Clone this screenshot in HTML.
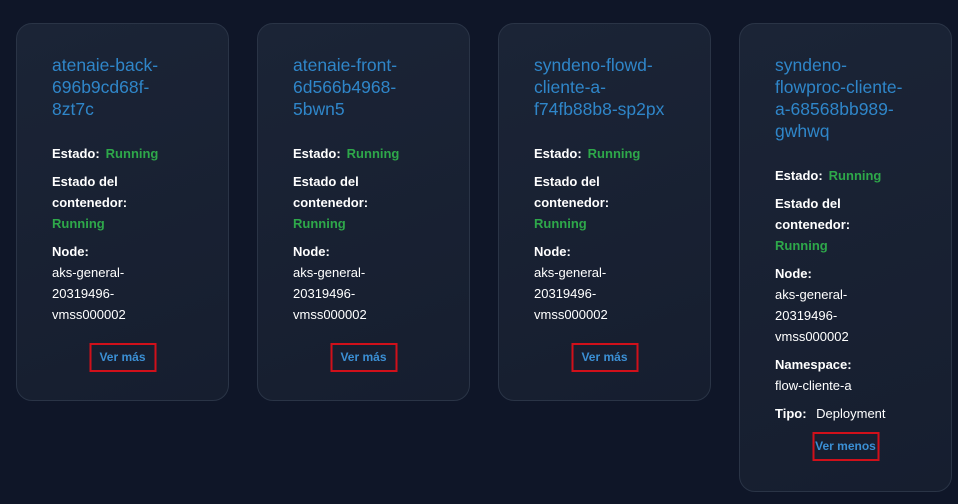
<!DOCTYPE html>
<html><head><meta charset="utf-8"><style>
body{margin:0;width:958px;height:504px;background:#0f1628;font-family:"Liberation Sans",sans-serif;overflow:hidden;position:relative}
.card{position:absolute;top:23px;width:213px;background:linear-gradient(160deg,#1b2436,#161e2f);border:1px solid #2a3446;border-radius:16px;box-sizing:border-box;padding:30px 10px 0 35px}
.t{color:#2f86c9;font-size:17.5px;line-height:22px;margin-bottom:23px}
.f{color:#fff;font-size:13px;line-height:21px;margin-bottom:7px}
.f b{margin-right:6px}
.g{color:#2ea84a;font-weight:bold}
.btn{position:absolute;left:50%;transform:translateX(-50%);border:2px solid #d0101a;color:#3b8fd4;font-size:12px;font-weight:bold;height:29px;box-sizing:border-box;line-height:25px;text-align:center;white-space:nowrap}
</style></head><body>
<div class="card" style="left:16px;height:378px"><div class="t">atenaie-back-<br>696b9cd68f-<br>8zt7c</div>
<div class="f"><b>Estado:</b><span class="g">Running</span></div>
<div class="f"><b>Estado del<br>contenedor:</b><br><span class="g">Running</span></div>
<div class="f"><b>Node:</b><br>aks-general-<br>20319496-<br>vmss000002</div>
<div class="btn" style="top:319px;width:67px">Ver más</div></div>
<div class="card" style="left:257px;height:378px"><div class="t">atenaie-front-<br>6d566b4968-<br>5bwn5</div>
<div class="f"><b>Estado:</b><span class="g">Running</span></div>
<div class="f"><b>Estado del<br>contenedor:</b><br><span class="g">Running</span></div>
<div class="f"><b>Node:</b><br>aks-general-<br>20319496-<br>vmss000002</div>
<div class="btn" style="top:319px;width:67px">Ver más</div></div>
<div class="card" style="left:498px;height:378px"><div class="t">syndeno-flowd-<br>cliente-a-<br>f74fb88b8-sp2px</div>
<div class="f"><b>Estado:</b><span class="g">Running</span></div>
<div class="f"><b>Estado del<br>contenedor:</b><br><span class="g">Running</span></div>
<div class="f"><b>Node:</b><br>aks-general-<br>20319496-<br>vmss000002</div>
<div class="btn" style="top:319px;width:67px">Ver más</div></div>
<div class="card" style="left:739px;height:469px;width:213px"><div class="t">syndeno-<br>flowproc-cliente-<br>a-68568bb989-<br>gwhwq</div>
<div class="f"><b>Estado:</b><span class="g">Running</span></div>
<div class="f"><b>Estado del<br>contenedor:</b><br><span class="g">Running</span></div>
<div class="f"><b>Node:</b><br>aks-general-<br>20319496-<br>vmss000002</div>
<div class="f"><b>Namespace:</b><br>flow-cliente-a</div>
<div class="f"><b>Tipo:</b> Deployment</div>
<div class="btn" style="top:408px;width:67px">Ver menos</div></div>
</body></html>
